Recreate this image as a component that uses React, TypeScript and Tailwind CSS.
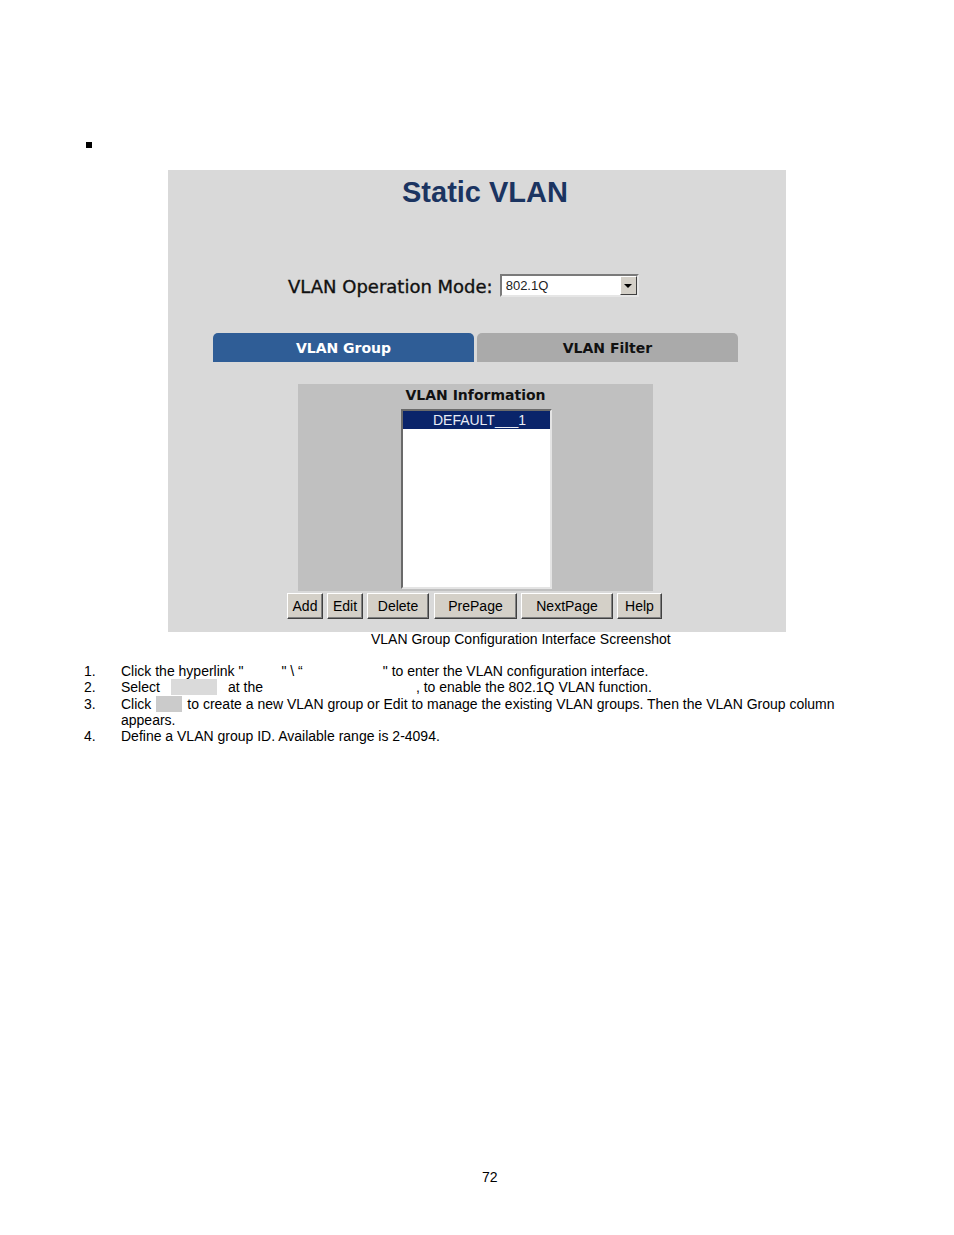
export default function App() {
  const btn =
    "h-[26px] bg-[#d4d0c8] border border-t-[#ffffff] border-l-[#ffffff] border-r-[#404040] border-b-[#404040] shadow-[inset_-1px_-1px_0_#808080] text-[14px] leading-[22px] text-black flex items-center justify-center font-['Liberation_Sans',Arial,sans-serif]";
  return (
    <div className="w-[954px] h-[1235px] bg-white font-['Liberation_Sans',Arial,sans-serif] text-black">
      <div className="pt-[142px] pl-[86px]">
        <div className="w-[6px] h-[6px] bg-black" />
      </div>

      {/* Screenshot panel */}
      <div className="ml-[168px] mt-[22px] w-[618px] h-[462px] bg-[#d9d9d9] flex flex-col items-start">
        <div className="ml-[234px] pt-[6px] text-[29px] leading-[32px] font-bold text-[#1b3461]">
          Static VLAN
        </div>

        <div className="ml-[120px] mt-[66px] flex items-center">
          <span className="pt-[2px] font-['DejaVu_Sans',Verdana,sans-serif] text-[18px] leading-[20px] text-[#111] [-webkit-text-stroke:0.35px_#111]">
            VLAN Operation Mode:
          </span>
          <div className="ml-[7px] w-[139px] h-[23px] bg-white border-2 border-t-[#7a7a7a] border-l-[#7a7a7a] border-r-[#e6e6e6] border-b-[#e6e6e6] flex items-center justify-between">
            <span className="pl-[4px] text-[13px] leading-[16px] text-[#222]">802.1Q</span>
            <div className="w-[17px] h-[19px] bg-[#d4d0c8] border border-t-[#ffffff] border-l-[#ffffff] border-r-[#404040] border-b-[#404040] flex items-center justify-center">
              <div className="w-0 h-0 border-l-[4px] border-r-[4px] border-t-[4px] border-l-transparent border-r-transparent border-t-black" />
            </div>
          </div>
        </div>

        <div className="ml-[45px] mt-[36px] flex gap-[3px]">
          <div className="w-[261px] h-[29px] pt-[2px] bg-[#2f5d96] rounded-t-[5px] flex items-center justify-center font-['DejaVu_Sans',Verdana,sans-serif] font-bold text-[14px] text-white">
            VLAN Group
          </div>
          <div className="w-[261px] h-[29px] pt-[2px] bg-[#aaaaaa] rounded-t-[5px] flex items-center justify-center font-['DejaVu_Sans',Verdana,sans-serif] font-bold text-[14px] text-[#111]">
            VLAN Filter
          </div>
        </div>

        <div className="ml-[130px] mt-[22px] w-[355px] h-[207px] bg-[#c0c0c0] flex flex-col items-start">
          <div className="w-full pt-[3px] text-center font-['DejaVu_Sans',Verdana,sans-serif] font-bold text-[14px] leading-[17px] text-[#111]">
            VLAN Information
          </div>
          <div className="ml-[103px] mt-[5px] w-[151px] h-[180px] bg-white border-2 border-t-[#6a6a6a] border-l-[#6a6a6a] border-r-[#e4e4e4] border-b-[#e4e4e4]">
            <div className="h-[18px] bg-[#0a246a] text-[#e8ecf5] text-[14px] leading-[18px] text-center pl-[6px]">
              DEFAULT___1
            </div>
          </div>
        </div>

        <div className="ml-[119px] mt-[2px] flex">
          <div className={btn + " w-[36px]"}>Add</div>
          <div className={btn + " w-[36px] ml-[4px]"}>Edit</div>
          <div className={btn + " w-[62px] ml-[4px]"}>Delete</div>
          <div className={btn + " w-[83px] ml-[5px]"}>PrePage</div>
          <div className={btn + " w-[92px] ml-[4px]"}>NextPage</div>
          <div className={btn + " w-[45px] ml-[4px]"}>Help</div>
        </div>
      </div>

      <div className="mt-[-1px] pl-[371px] text-[14px] leading-[16px]">
        VLAN Group Configuration Interface Screenshot
      </div>

      <div className="mt-[16px] text-[14px] leading-[16.25px]">
        <div className="flex">
          <span className="ml-[84px] w-[37px] shrink-0">1.</span>
          <span className="whitespace-pre">
            {'Click the hyperlink "'}
            <span className="inline-block w-[38px]" />
            {'" \\ “'}
            <span className="inline-block w-[80px]" />
            {'" to enter the VLAN configuration interface.'}
          </span>
        </div>
        <div className="flex">
          <span className="ml-[84px] w-[37px] shrink-0">2.</span>
          <span className="whitespace-pre">
            {'Select'}
            <span className="inline-block w-[11px]" />
            <span className="inline-block w-[46px] h-[16px] align-top bg-[#dadada]" />
            <span className="inline-block w-[11px]" />
            {'at the'}
            <span className="inline-block w-[153px]" />
            {', to enable the 802.1Q VLAN function.'}
          </span>
        </div>
        <div className="flex">
          <span className="ml-[84px] w-[37px] shrink-0">3.</span>
          <span className="whitespace-pre">
            {'Click'}
            <span className="inline-block w-[5px]" />
            <span className="inline-block w-[26px] h-[16px] align-top bg-[#cbcbcb]" />
            <span className="inline-block w-[5px]" />
            {'to create a new VLAN group or Edit to manage the existing VLAN groups. Then the VLAN Group column'}
            <br />
            {'appears.'}
          </span>
        </div>
        <div className="flex">
          <span className="ml-[84px] w-[37px] shrink-0">4.</span>
          <span>Define a VLAN group ID. Available range is 2-4094.</span>
        </div>
      </div>

      <div className="mt-[425px] pl-[482px] text-[14px] leading-[16px]">72</div>
    </div>
  );
}
